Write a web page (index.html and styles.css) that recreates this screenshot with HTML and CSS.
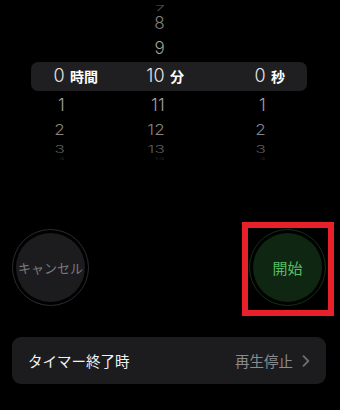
FILE: index.html
```html
<!DOCTYPE html>
<html lang="ja">
<head>
<meta charset="utf-8">
<link rel="stylesheet" href="styles.css">
</head>
<body>
<div class="screen">
  <div class="picker">
    <div class="row r7"><span class="n c2">7</span></div>
    <div class="row r8"><span class="n c2">8</span></div>
    <div class="row r9"><span class="n c2">9</span></div>
    <div class="row sel">
      <span class="n c1">0</span><span class="u">時間</span>
      <span class="n c2">10</span><span class="u">分</span>
      <span class="n c3">0</span><span class="u">秒</span>
    </div>
    <div class="row r1"><span class="n c1">1</span><span class="n c2">11</span><span class="n c3">1</span></div>
    <div class="row r2"><span class="n c1">2</span><span class="n c2">12</span><span class="n c3">2</span></div>
    <div class="row r3"><span class="n c1">3</span><span class="n c2">13</span><span class="n c3">3</span></div>
    <div class="row r4"><span class="n c1">4</span><span class="n c2">14</span><span class="n c3">4</span></div>
  </div>

  <div class="buttons">
    <div class="btn cancel"><div class="face">キャンセル</div></div>
    <div class="start-wrap">
      <div class="btn start"><div class="face">開始</div></div>
      <div class="mark"></div>
    </div>
  </div>

  <div class="card">
    <span class="label">タイマー終了時</span>
    <span class="value">再生停止
      <svg class="chev" width="8" height="12" viewBox="0 0 8 12"><path d="M1.5 1.2 L6.3 6 L1.5 10.8" fill="none" stroke="#6e6e72" stroke-width="1.8" stroke-linecap="round" stroke-linejoin="round"/></svg>
    </span>
  </div>
</div>
</body>
</html>
```

FILE: styles.css
```css
html, body {
  margin: 0;
  padding: 0;
  background: #000;
}
.screen {
  width: 340px;
  height: 410px;
  background: #000;
  overflow: hidden;
  font-family: "Noto Sans CJK JP", "Noto Sans", sans-serif;
  display: flex;
  flex-direction: column;
}
.picker {
  display: flex;
  flex-direction: column;
  height: 158px;
}
.row {
  display: grid;
  grid-template-columns: 34px 60px 40px 61px 40px 41px;
  margin: 0 33px 0 31px;
  align-items: center;
}
.n {
  font-family: Inter, Roboto, "Liberation Sans", sans-serif;
  font-weight: 300;
  font-size: 17px;
  line-height: 1;
  text-align: right;
  letter-spacing: 0.3px;
}
.c1 { grid-column: 1; }
.c2 { grid-column: 3; }
.c3 { grid-column: 5; }
.u {
  font-weight: 700;
  font-size: 14px;
  line-height: 1;
  color: #fff;
  padding-left: 5px;
}
.sel {
  height: 30px;
  background: #1f1f21;
  border-radius: 7px;
}
.sel .n { color: #e6e6e6; font-size: 18px; }
.r7 { height: 11px; }
.r7 .n { color: #5a5a5a; transform: scaleY(0.45); }
.r8 { height: 25px; }
.r8 .n { color: #808080; }
.r9 { height: 26px; }
.r9 .n { color: #a2a2a2; }
.r1 { height: 28px; }
.r1 .n { color: #a2a2a2; }
.r2 { height: 22px; }
.r2 .n { color: #858585; transform: scaleY(0.85); }
.r3 { height: 13px; }
.r3 .n { color: #5e5e5e; transform: scaleY(0.6); }
.r4 { height: 4px; }
.r4 .n { color: #2a2a2a; font-size: 10px; transform: scaleY(0.3); }

.buttons {
  display: flex;
  justify-content: space-between;
  align-items: center;
  margin-top: 71px;
  padding: 0 14px 0 12px;
}
.btn {
  width: 77px;
  height: 77px;
  box-sizing: border-box;
  border-radius: 50%;
  padding: 3px;
  display: flex;
}
.face {
  flex: 1;
  border-radius: 50%;
  display: flex;
  align-items: center;
  justify-content: center;
  white-space: nowrap;
}
.cancel { border: 1.5px solid #2c2c2e; }
.cancel .face { background: #1c1c1e; color: #7a7a7c; font-size: 13px; }
.start { border: 1.5px solid #15301a; }
.start .face { background: #0e2612; color: #57bf62; font-size: 15px; }
.start-wrap {
  position: relative;
}
.mark {
  position: absolute;
  left: -7px;
  top: -7px;
  right: -8px;
  bottom: -10px;
  border: 6px solid #e8202a;
}

.card {
  margin: 31px 14px 0 12px;
  height: 47px;
  background: #1c1c1e;
  border-radius: 9px;
  display: flex;
  align-items: center;
  justify-content: space-between;
  padding: 0 16px;
}
.label {
  color: #f2f2f2;
  font-size: 14.5px;
}
.value {
  color: #8b8b8e;
  font-size: 14.5px;
  display: flex;
  align-items: center;
  gap: 9px;
}
.chev { display: block; }
```
